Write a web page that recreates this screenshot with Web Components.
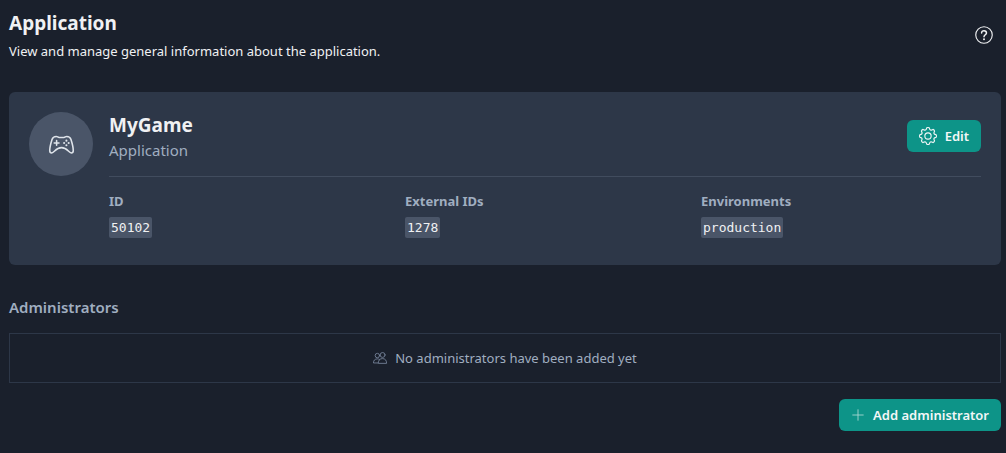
<!DOCTYPE html>
<html lang="en">
<head>
<meta charset="utf-8">
<title>Application</title>
<style>
  html { background: #1a202c; }
  body {
    margin: 0;
    color: #f0f1f3;
    font-family: "Noto Sans", "Open Sans", sans-serif;
    font-size: 13px;
    line-height: 20px;
  }
</style>
</head>
<body>
<app-page></app-page>

<script>
const define = (name, html, setup) => {
  const template = document.createElement("template");
  template.innerHTML = "<style>*{box-sizing:border-box}h1,h2,p,dl,dd{margin:0}</style>" + html;
  customElements.define(name, class extends HTMLElement {
    constructor() {
      super();
      this.attachShadow({ mode: "open" }).append(template.content.cloneNode(true));
    }
    connectedCallback() {
      if (setup) setup(this, this.shadowRoot);
    }
  });
};

const gear = () => {
  const points = [];
  for (let i = 0; i < 8; i++) {
    const at = (radius, offset) => {
      const a = (i * 45 + offset) * Math.PI / 180;
      return (12 + radius * Math.sin(a)).toFixed(2) + " " + (12 - radius * Math.cos(a)).toFixed(2);
    };
    points.push((i ? "L" : "M") + at(11, -8) + "Q" + at(11.8, 0) + " " + at(11, 8) +
      "L" + at(9.6, 13) + "Q" + at(7.8, 22.5) + " " + at(9.6, 32));
  }
  return '<path d="' + points.join("") + 'Z"/><circle cx="12" cy="12" r="4.2"/>';
};

const icons = {
  gamepad: '<path d="M7 4.300C4.700 4.300 3.500 5.200 2.900 7.200 1.600 11.300.7 14.800.7 17.800c0 1.500.8 2.300 1.900 2.300 2.600 0 3.700-5.100 9.400-5.100s6.800 5.100 9.400 5.100c1.100 0 1.900-.8 1.900-2.300 0-3-.9-6.500-2.200-10.600C20.500 5.200 19.300 4.300 17 4.300c-1.200 0-1.500.9-2.700.9H9.700c-1.200 0-1.500-.9-2.700-.9z"/><path d="M7.300 8.200v4.600M5 10.500h4.600"/><g fill="currentColor" stroke="none"><circle cx="16.700" cy="8.300" r="1"/><circle cx="16.700" cy="12.700" r="1"/><circle cx="14.500" cy="10.500" r="1"/><circle cx="18.900" cy="10.500" r="1"/></g>',
  help: '<circle cx="12" cy="12" r="11"/><path stroke-width="2" d="M8.800 9.400C8.800 7.400 10.100 6.200 12 6.200s3.300 1.200 3.300 3c0 2.300-3.300 2.700-3.300 5.200"/><circle cx="12" cy="17.700" r="1.300" fill="currentColor" stroke="none"/>',
  gear: gear(),
  plus: '<path d="M12 3v18M3 12h18"/>',
  users: '<circle cx="7.500" cy="7.800" r="3.800"/><circle cx="16.500" cy="6.800" r="4.200"/><path d="M8 20.500H.8c0-4.500 2.500-7 6.700-7 1.500 0 2.600.3 3.600.9M9 20.500c0-4.800 3-7.500 7.300-7.500s7 2.700 7 7.500z"/>'
};

define("app-icon", `
  <style>
    :host { display: block; flex: none; width: var(--icon-size, 16px); height: var(--icon-size, 16px); }
    svg { display: block; width: 100%; height: 100%; overflow: visible; }
  </style>
  <svg viewBox="0 0 24 24" fill="none" stroke="currentColor" stroke-width="1.5" stroke-linecap="round" stroke-linejoin="round" aria-hidden="true"></svg>
`, (host, root) => { root.querySelector("svg").innerHTML = icons[host.getAttribute("name")]; });

define("app-button", `
  <style>
    :host { display: block; flex: none; }
    button {
      display: flex; align-items: center; gap: 8px;
      height: 32px; padding: 0 12px;
      border: 0; border-radius: 6px;
      background: #0d9488; color: #f3f7f7;
      font: inherit; font-weight: 600; cursor: pointer; white-space: nowrap;
    }
  </style>
  <button type="button"><slot name="icon"></slot><span><slot></slot></span></button>
`);

define("page-header", `
  <style>
    :host { display: flex; align-items: center; justify-content: space-between; padding-right: 8px; }
    h1 { font-size: 19px; line-height: 28px; font-weight: 700; }
    p { margin-top: 4px; color: #f0f1f3; }
    button { display: block; padding: 0; border: 0; background: none; color: inherit; cursor: pointer; --icon-size: 18px; }
  </style>
  <div><h1><slot name="title"></slot></h1><p><slot></slot></p></div>
  <button type="button" aria-label="Help"><app-icon name="help"></app-icon></button>
`);

define("detail-item", `
  <style>
    :host { display: block; }
    dt { color: #a0aec0; font-weight: 700; }
    dd { display: flex; margin-top: 6px; }
    code {
      padding: 0 2px; border-radius: 2px;
      background: #4a5568; color: #f0f1f3;
      font: 13px/21px "DejaVu Sans Mono", monospace;
    }
  </style>
  <dl><dt><slot name="label"></slot></dt><dd><code><slot></slot></code></dd></dl>
`);

define("application-card", `
  <style>
    :host {
      display: flex; align-items: flex-start; gap: 16px;
      padding: 20px 20px 27px; border-radius: 6px; background: #2d3748;
    }
    .avatar {
      display: grid; place-items: center; flex: none;
      width: 64px; height: 64px; border-radius: 50%;
      background: #4a5568; color: #dfe4ea; --icon-size: 25px;
    }
    .body { flex: 1; min-width: 0; }
    .top {
      display: flex; justify-content: space-between; align-items: flex-start;
      height: 65px; border-bottom: 1px solid #414c5e;
    }
    h2 { font-size: 19px; line-height: 26px; font-weight: 700; }
    p { font-size: 15px; line-height: 24px; color: #a0aec0; }
    app-button { margin-top: 8px; --icon-size: 18px; }
    .details { display: grid; grid-template-columns: repeat(3, 1fr); gap: 16px; margin-top: 14px; }
  </style>
  <div class="avatar"><app-icon name="gamepad"></app-icon></div>
  <div class="body">
    <div class="top">
      <div><h2><slot name="name"></slot></h2><p><slot name="kind"></slot></p></div>
      <app-button><app-icon slot="icon" name="gear"></app-icon>Edit</app-button>
    </div>
    <div class="details"><slot></slot></div>
  </div>
`);

define("administrator-list", `
  <style>
    :host { display: block; }
    h2 { font-size: 15px; line-height: 24px; font-weight: 600; color: #a0aec0; }
    .empty {
      display: flex; align-items: center; justify-content: center; gap: 8px;
      height: 50px; margin-top: 14px; border: 1px solid #2d3748; color: #a0aec0;
    }
    .empty app-icon { --icon-size: 14px; color: #76839a; }
    .actions { display: flex; justify-content: flex-end; margin-top: 16px; --icon-size: 14px; }
    .actions app-icon { color: #a9d8d2; }
  </style>
  <h2>Administrators</h2>
  <div class="empty"><app-icon name="users"></app-icon><span>No administrators have been added yet</span></div>
  <div class="actions"><app-button><app-icon slot="icon" name="plus"></app-icon>Add administrator</app-button></div>
`);

define("app-page", `
  <style>
    :host { display: block; padding: 9px 5px 22px 9px; }
    application-card { margin-top: 31px; }
    administrator-list { margin-top: 30px; }
  </style>
  <page-header><span slot="title">Application</span>View and manage general information about the application.</page-header>
  <application-card>
    <span slot="name">MyGame</span>
    <span slot="kind">Application</span>
    <detail-item><span slot="label">ID</span>50102</detail-item>
    <detail-item><span slot="label">External IDs</span>1278</detail-item>
    <detail-item><span slot="label">Environments</span>production</detail-item>
  </application-card>
  <administrator-list></administrator-list>
`);
</script>
</body>
</html>
